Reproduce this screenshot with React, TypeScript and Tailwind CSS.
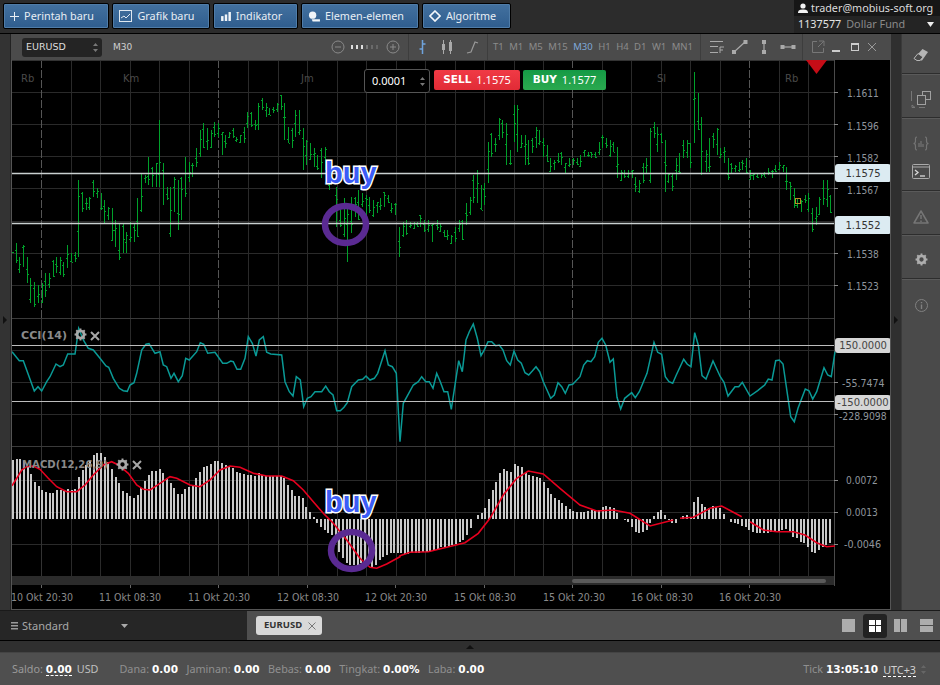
import React from "react";

const A: number[][] = [[36,575,580],[48,550,610],[57,590,640],[68,555,620],[80,590,670],[90,655,730],[102,665,740],[113,675,730],[125,670,730],[135,640,710],[147,640,685],[158,600,650],[168,590,640],[180,590,645],[190,605,650],[200,555,625],[212,580,605],[224,575,605],[234,360,590],[245,395,455],[257,415,450],[268,410,450],[279,360,410],[290,385,415],[302,400,450],[313,420,490],[324,440,480],[335,445,540],[346,480,560],[357,490,600],[368,490,580],[379,515,580],[390,485,545],[401,490,545],[412,415,530],[423,340,455],[434,345,370],[445,290,375],[456,320,380],[467,310,380],[478,180,380],[489,310,435],[500,380,420],[511,380,530],[522,350,455],[533,360,510],[544,350,480],[555,290,410],[566,305,365],[577,310,350],[588,265,320],[599,210,290],[610,190,265],[621,205,270],[632,210,260],[643,185,230],[654,190,230],[665,215,285],[676,225,265],[687,215,235],[698,205,235],[709,230,245],[720,225,245],[731,200,250],[742,155,205],[753,155,200],[764,180,210],[775,130,210],[786,115,150],[797,130,170],[808,145,165],[819,140,160],[830,130,155],[842,105,150],[853,130,240],[864,200,250],[875,205,265],[886,150,230],[897,150,225],[908,205,330],[919,240,315],[930,250,300],[941,265,320],[952,285,330],[963,265,355],[975,260,330],[987,310,390],[1009,380,500],[1020,450,500],[1031,415,530],[1042,440,605],[1053,410,520],[1064,410,470],[1075,390,480],[1086,400,440],[1097,405,465],[1108,410,460],[1119,420,470],[1130,425,460],[1141,415,450],[1152,395,440],[1163,405,430],[1174,430,460],[1185,430,465],[1197,500,590],[1208,485,530],[1219,480,525],[1230,485,505],[1241,485,505],[1252,485,500]];
const B: number[][] = [[0,465,500],[12,480,515],[24,480,515],[37,490,545],[50,480,510],[60,490,515],[71,510,530],[82,510,540],[93,525,550],[105,500,545],[116,480,515],[125,480,540],[138,430,495],[150,410,465],[160,345,430],[170,330,430],[182,375,450],[192,370,435],[203,245,370],[214,220,290],[225,235,275],[236,175,240],[247,180,235],[258,190,315],[269,270,315],[281,135,245],[292,135,275],[303,225,260],[314,225,315],[325,240,315],[336,235,280],[347,200,265],[358,210,255],[369,235,290],[380,255,305],[391,295,335],[402,300,330],[413,280,310],[424,275,315],[435,310,340],[447,295,320],[458,295,315],[470,295,315],[481,285,320],[492,270,290],[503,275,290],[514,275,295],[525,275,295],[536,245,285],[547,225,265],[558,235,265],[569,240,290],[580,245,275],[591,260,355],[602,330,360],[613,330,355],[624,330,355],[635,330,355],[646,350,395],[657,360,398],[668,310,370],[679,295,340],[690,205,370],[701,185,235],[712,200,275],[723,220,250],[734,240,395],[745,340,370],[756,340,392],[767,295,360],[778,280,340],[789,240,295],[800,240,295],[811,250,325],[822,35,250],[833,100,210],[844,170,345],[857,270,335],[868,235,335],[879,220,265],[890,205,285],[901,265,290],[912,260,310],[923,295,360],[934,310,340],[945,315,335],[956,305,335],[967,300,330],[978,295,340],[989,330,360],[1000,340,360],[1011,340,355],[1022,340,355],[1033,335,350],[1044,325,345],[1055,330,355],[1066,315,335],[1077,305,330],[1088,315,335],[1099,320,390],[1110,365,420],[1121,385,445],[1132,415,445],[1143,420,455],[1154,405,430],[1165,400,455],[1176,445,515],[1187,440,495],[1198,410,465],[1209,360,435],[1220,360,440],[1231,405,460]];

const cciA = [36,125,58,152,70,152,103,243,114,230,125,243,140,215,150,200,168,162,180,170,190,165,203,132,225,132,236,55,250,90,265,115,280,120,300,145,318,168,326,172,340,205,358,235,370,242,382,244,390,225,402,218,410,190,425,120,438,103,447,101,465,130,480,125,490,165,500,170,513,205,522,190,535,215,547,197,557,145,568,150,590,125,601,98,611,103,623,130,645,127,668,160,680,160,692,153,700,155,711,178,722,178,735,145,745,80,757,100,768,138,778,90,790,80,800,127,812,132,845,135,855,215,868,245,879,258,889,200,901,210,911,290,922,265,933,260,945,245,965,245,977,228,988,245,999,255,1010,302,1021,302,1032,292,1042,278,1055,230,1075,210,1088,208,1098,198,1110,210,1123,205,1133,190,1155,122,1165,165,1177,170,1189,190,1200,395];
const cciB = [0,365,10,250,40,195,55,185,65,170,77,185,88,185,99,205,110,160,121,185,132,215,143,215,154,268,176,122,187,155,198,60,208,35,220,12,232,55,243,107,253,90,264,65,275,65,287,77,298,75,309,90,320,122,331,135,342,93,353,120,364,130,375,158,386,165,397,153,408,140,419,155,430,185,452,235,463,225,474,188,485,200,496,220,507,195,518,193,540,170,551,135,562,122,573,125,584,110,595,67,606,55,617,75,630,127,640,117,651,232,662,267,674,235,695,218,706,233,718,215,741,160,762,67,773,97,785,103,796,170,807,185,818,190,829,165,851,118,862,133,873,140,884,38,895,75,906,167,918,177,939,123,961,170,972,187,984,228,1005,200,1016,200,1027,187,1050,228,1073,212,1094,195,1105,177,1116,180,1127,122,1138,120,1149,132,1172,290,1183,305,1194,265,1216,207,1227,212,1238,237,1250,215,1272,143,1283,165,1294,170,1305,95];

const histA = [450,448,448,452,470,492,515,528,541,547,548,548,540,540,543,538,540,537,500,480,465,450,435,430,430,440,455,478,500,520,542,548,558,565,555,535,512,495,483,482,478,490,505,520,535,552,553,538,530,525,505,485,470,468,462,452,452,460,465,470,475,487,490,492,495,495,498,490,495,497,497,497,497,497,503,525,540,558,558,565,590,605,622,640,650,660,670,675,690,725,745,760,765,765,765,760,760,760,770,765,750,740,735,730,730,728];
const histB = [700,703,702,700,698,698,696,696,695,690,688,680,680,678,675,672,665,660,645,625,598,585,578,565,537,510,487,458,447,453,457,433,437,440,455,465,468,470,475,485,505,522,535,540,548,558,567,572,575,575,575,572,570,572,570,560,558,562,563,578,597,600,605,620,635,638,635,630,608,587,577,570,585,600,610,610,597,587,585,595,545,530,552,562,565,558,560,565,582,597,605,610,612,617,622,630,635,640,640,640,638,635,632,632,630,628,635,650,655,665,670,680,695,700,690,680,675,670];

const redA = [36,527,50,505,65,480,80,470,100,468,120,478,145,505,170,530,200,545,230,545,255,525,280,495,310,465,335,455,355,465,385,490,410,525,430,538,450,540,480,520,510,500,530,505,570,525,600,530,630,510,660,480,690,468,720,472,760,490,800,498,845,498,880,512,910,540,940,575,970,610,1000,640,1040,690,1080,745,1110,772,1130,775,1160,762,1200,740];
const redB = [0,707,30,697,85,695,140,682,195,668,235,640,270,595,310,525,350,475,385,453,430,462,480,505,540,555,590,573,640,570,690,580,750,618,820,600];
const redC = [840,595,880,592,930,565,965,558,1025,590];
const redD = [1050,605,1090,630,1130,635,1180,635,1215,645,1250,668,1280,680,1305,678];

const pts = (a: number[], ox: number, oy: number) => {
  const out: string[] = [];
  for (let i = 0; i < a.length; i += 2) out.push(`${(ox + a[i] / 3).toFixed(1)},${(oy + a[i + 1] / 3).toFixed(1)}`);
  return out.join(" ");
};

const barPath = (() => {
  let d = "";
  const add = (r: number[], ox: number, oy: number, i: number) => {
    const x = Math.round(ox + r[0] / 3) + 0.5;
    const t = Math.round(oy + r[1] / 3);
    const b = Math.round(oy + r[2] / 3);
    const f1 = ((i * 37) % 100) / 100;
    const f2 = ((i * 61 + 23) % 100) / 100;
    const o = Math.round(t + (b - t) * f1) + 0.5;
    const c = Math.round(t + (b - t) * f2) + 0.5;
    d += `M${x} ${t}V${b}M${x - 1.5} ${o}H${x}M${x} ${c}H${x + 1.5}`;
  };
  A.forEach((r, i) => add(r, 0, 60, i));
  B.forEach((r, i) => add(r, 420, 60, i + 200));
  return d;
})();

const histPath = (() => {
  let d = "";
  histA.forEach((v, i) => {
    const x = Math.round((36 + i * 11) / 3) + 1;
    d += `M${x} 519V${Math.round(310 + v / 3)}`;
  });
  histB.forEach((v, i) => {
    const x = Math.round(400 + (i * 11) / 3) + 1;
    d += `M${x} 519V${Math.round(320 + v / 3)}`;
  });
  return d;
})();

const vGrid = [71, 100, 130, 159, 189, 248, 278, 307, 337, 366, 396, 425, 455, 484, 514, 543, 602, 631, 661, 690, 720, 779, 808];
const vDash = [41, 218, 572, 749];
const hGrid = [92, 124, 156, 188, 221, 253, 285, 350, 382, 414, 480, 512, 544];
const xLabels: [number, string][] = [[11, "10 Okt 20:30"], [99, "11 Okt 08:30"], [188, "11 Okt 20:30"], [277, "12 Okt 08:30"], [365, "12 Okt 20:30"], [454, "15 Okt 08:30"], [543, "15 Okt 20:30"], [631, "16 Okt 08:30"], [719, "16 Okt 20:30"]];
const yLabels: [number, string, number][] = [[847, "1.1611", 97], [847, "1.1596", 130], [847, "1.1582", 162], [847, "1.1567", 194], [847, "1.1538", 258], [847, "1.1523", 290], [842, "-55.7474", 387], [839, "-228.9098", 420], [846, "0.0072", 484], [846, "0.0013", 516], [844, "-0.0046", 548]];

function Chart() {
  return (
    <svg viewBox="11 60 880 549" width={880} height={549} className="block">
      <g stroke="#2a2a2a" strokeWidth={1} shapeRendering="crispEdges">
        {vGrid.map((x) => <path key={x} d={`M${x + 0.5} 60V576`} />)}
        {hGrid.map((y) => <path key={y} d={`M12 ${y + 0.5}H834`} />)}
      </g>
      <g stroke="#555" strokeWidth={1} strokeDasharray="8 2" shapeRendering="crispEdges">
        {vDash.map((x) => <path key={x} d={`M${x + 0.5} 60V318`} />)}
      </g>
      <g stroke="#333" strokeWidth={1} shapeRendering="crispEdges">
        {vDash.map((x) => <path key={x} d={`M${x + 0.5} 318V576`} />)}
        <path d="M12 60.5H834" />
        <path d="M12 318.5H834M12 446.5H834" stroke="#3a3a3a" strokeWidth={1.5} />
        <path d="M834.5 60V586" stroke="#4a4a4a" />
      </g>
      <g stroke="#888" shapeRendering="crispEdges">
        {[92, 124, 156, 188, 253, 285, 382, 414, 480, 512, 544].map((y) => <path key={y} d={`M834 ${y + 0.5}H838`} />)}
      </g>
      <path d={barPath} stroke="#00a02a" strokeWidth={1} fill="none" shapeRendering="crispEdges" />
      <path d="M12 173.5H834" stroke="#c9d0d0" strokeWidth={1.6} />
      <path d="M12 223.5H834" stroke="#c9d0d0" strokeWidth={1.6} />
      <rect x={795.5} y={198.5} width={5} height={5} fill="none" stroke="#b88a28" />
      <polyline points={pts(cciA, 0, 310) + " " + pts(cciB, 400, 320)} fill="none" stroke="#0a9a96" strokeWidth={1.5} />
      <path d="M12 345.5H834M12 401.5H834" stroke="#bdbdbd" strokeWidth={1} shapeRendering="crispEdges" />
      <path d={histPath} stroke="#c8c8c8" strokeWidth={2} fill="none" shapeRendering="crispEdges" />
      <polyline points={pts(redA, 0, 310) + " " + pts(redB, 400, 320)} fill="none" stroke="#e8001f" strokeWidth={1.6} />
      <polyline points={pts(redC, 400, 320)} fill="none" stroke="#e8001f" strokeWidth={1.6} />
      <polyline points={pts(redD, 400, 320)} fill="none" stroke="#e8001f" strokeWidth={1.6} />
      <ellipse cx={345.5} cy={224.5} rx={20.5} ry={18.5} fill="none" stroke="#5a2a92" strokeWidth={6.5} />
      <ellipse cx={351.5} cy={550.5} rx={20.5} ry={18.5} fill="none" stroke="#5a2a92" strokeWidth={6.5} />
      <path d="M806 60H827L816.5 74Z" fill="#c60d17" />
      <rect x={12} y={576} width={822} height={9} fill="#2b2b2b" />
      <rect x={572} y={579} width={254} height={4} rx={2} fill="#5a5a5a" />
      <g stroke="#666" shapeRendering="crispEdges">
        {[41, 130, 218, 307, 395, 484, 572, 661, 749].map((x) => <path key={x} d={`M${x + 0.5} 585V588`} />)}
      </g>
      <g fill="#8f959c" fontSize={10} fontFamily="'DejaVu Sans', sans-serif">
        {yLabels.map(([x, t, y]) => <text key={t} x={x} y={y} textLength={t.length * 5.3} lengthAdjust="spacingAndGlyphs">{t}</text>)}
      </g>
      <g fill="#8a8a8a" fontSize={10} fontFamily="'DejaVu Sans', sans-serif">
        {xLabels.map(([x, t]) => <text key={t} x={x} y={601} textLength={62} lengthAdjust="spacingAndGlyphs">{t}</text>)}
      </g>
      <g fill="#4a4a4a" fontSize={10} fontFamily="'DejaVu Sans', sans-serif">
        <text x={21} y={82}>Rb</text>
        <text x={123} y={82}>Km</text>
        <text x={301} y={82}>Jm</text>
        <text x={657} y={82}>Sl</text>
        <text x={785} y={82}>Rb</text>
      </g>
      <g fill="#8a8a8a" fontSize={11} fontWeight={700} fontFamily="'DejaVu Sans', sans-serif">
        <text x={21} y={339} textLength={46} lengthAdjust="spacingAndGlyphs">CCI(14)</text>
        <text x={22} y={468} textLength={86} lengthAdjust="spacingAndGlyphs">MACD(12,26,9)</text>
      </g>
    </svg>
  );
}

function Gear({ x, y }: { x: string; y: string }) {
  return (
    <svg width="13" height="13" viewBox="0 0 24 24" className={`absolute ${x} ${y}`}>
      <circle cx="12" cy="12" r="6.5" fill="none" stroke="#a8a8a8" strokeWidth="5" />
      <path d="M12 1v4M12 19v4M1 12h4M19 12h4M4.2 4.2l3 3M16.8 16.8l3 3M4.2 19.800l3-3M16.800 7.200l3-3" stroke="#a8a8a8" strokeWidth="3.500" />
    </svg>
  );
}

function Cross({ x, y }: { x: string; y: string }) {
  return (
    <svg width="10" height="10" viewBox="0 0 10 10" className={`absolute ${x} ${y}`}>
      <path d="M1 1l8 8M9 1l-8 8" stroke="#a8a8a8" strokeWidth="2" />
    </svg>
  );
}

function HeaderButton({ icon, label, w }: { icon: React.ReactNode; label: string; w: string }) {
  return (
    <div className={`${w} h-[26px] flex items-center justify-center gap-[5px] pr-[8px] rounded-[2px] border border-black bg-gradient-to-b from-[#43719f] to-[#2f5d8e] text-[10.8px] text-[#e8eef4] shadow-[inset_0_0_0_1px_#4f7ca8]`}>
      {icon}
      <span>{label}</span>
    </div>
  );
}

function Tf({ t, active }: { t: string; active?: boolean }) {
  return <span className={active ? "text-[#7fa9d9]" : "text-[#8c8c8c]"}>{t}</span>;
}

function SideRow({ h, children }: { h: string; children: React.ReactNode }) {
  return <div className={`${h} flex flex-col items-center justify-center gap-[13px] border-b border-[#2d2d2d] shadow-[0_1px_0_#5a5a5a]`}>{children}</div>;
}

function Stat({ label, value }: { label: string; value: string }) {
  return (
    <span className="flex items-baseline gap-[3px]">
      <span className="text-[#8f8f8f]">{label}</span>
      <span className="font-['DejaVu_Sans',sans-serif] text-[10.5px] font-bold text-white">{value}</span>
    </span>
  );
}

export default function App() {
  return (
    <div className="w-[940px] h-[685px] flex flex-col overflow-hidden bg-[#2b2b2b] font-['Noto_Sans',sans-serif]">
      {/* top bar */}
      <header className="h-[34px] shrink-0 flex justify-between border-b border-black bg-[#2c2c2c]">
        <div className="flex items-center gap-[3px] pl-[3px] pb-[1px]">
          <HeaderButton w="w-[106px]" label="Perintah baru" icon={<svg width="9" height="9" viewBox="0 0 9 9"><path d="M4.500 0v9M0 4.500h9" stroke="#e8eef4" strokeWidth="1" /></svg>} />
          <HeaderButton w="w-[98px]" label="Grafik baru" icon={<svg width="13" height="12" viewBox="0 0 13 12" fill="none" stroke="#dfe8f0"><rect x=".5" y=".5" width="12" height="11" /><path d="M2 8l3-2 2 2 4-4" /></svg>} />
          <HeaderButton w="w-[85px]" label="Indikator" icon={<svg width="10" height="9" viewBox="0 0 12 11" fill="#f0f4f8"><rect y="5" width="3" height="6" /><rect x="4.500" y="3" width="3" height="8" /><rect x="9" width="3" height="11" /></svg>} />
          <HeaderButton w="w-[118px]" label="Elemen-elemen" icon={<svg width="12" height="11" viewBox="0 0 13 12" fill="#f0f4f8"><circle cx="5" cy="4.500" r="4" /><path d="M4 9h9v2.500H5z" /></svg>} />
          <HeaderButton w="w-[89px]" label="Algoritme" icon={<svg width="12" height="12" viewBox="0 0 12 12" fill="none" stroke="#f4f7fa" strokeWidth="1.600"><path d="M6 1l5 5-5 5-5-5z" /></svg>} />
        </div>
        <div className="w-[146px] flex flex-col text-[10.8px] leading-none">
          <div className="h-[16px] bg-[#161616] flex items-center gap-[3px] pl-[4px] text-[#dcdcdc]">
            <svg width="10" height="10" viewBox="0 0 10 10" fill="#f2f2f2"><circle cx="5" cy="3" r="2.600" /><path d="M0 10c0-3 2-3.500 5-3.500s5 .5 5 3.500z" /></svg>
            <span>trader@mobius-soft.org</span>
          </div>
          <div className="flex-1 bg-[#242424] flex items-center pl-[4px] pr-[6px]">
            <span className="text-[#e4e4e4]">1137577</span>
            <span className="ml-[5px] text-[#8a8a8a]">Dollar Fund</span>
            <svg width="7" height="5" viewBox="0 0 7 5" className="ml-auto"><path d="M0 0h7L3.500 5z" fill="#eee" /></svg>
          </div>
        </div>
      </header>

      {/* main */}
      <main className="h-[576px] shrink-0 flex">
        <div className="w-[11px] bg-[#333] flex items-center pb-[4px] pl-[3px] border-r border-[#222]">
          <svg width="4" height="8" viewBox="0 0 4 8"><path d="M0 0l4 4-4 4z" fill="#111" /></svg>
        </div>
        <section className="w-[880px] flex flex-col">
          <div className="h-[26px] shrink-0 flex bg-[#4b4b4b] text-[10px] leading-none">
            <div className="w-[398px] flex items-center border-r border-[#3d3d3d]">
              <div className="ml-[11px] w-[80px] h-[19px] rounded-[3px] bg-[#242424] flex items-center pl-[4px] pr-[4px] text-[9.500px] text-[#dedede] font-['DejaVu_Sans',sans-serif]">
                <span>EURUSD</span>
                <svg width="5" height="11" viewBox="0 0 5 11" className="ml-auto"><path d="M0 4l2.500-3 2.500 3zM0 7l2.500 3 2.500-3z" fill="#777" /></svg>
              </div>
              <span className="ml-[11px] text-[9px] text-[#d0d0d0] font-['DejaVu_Sans',sans-serif]">M30</span>
              <svg width="72" height="14" viewBox="0 0 72 14" className="ml-auto mr-[5px]" fill="none" stroke="#8a8a8a">
                <circle cx="7" cy="7" r="6" /><path d="M4 7h6" />
                <circle cx="62" cy="7" r="6" /><path d="M59 7h6M62 4v6" />
                <g stroke="none">
                  <rect x="20" y="5" width="2" height="4" fill="#ddd" /><rect x="25" y="5" width="2" height="4" fill="#ddd" /><rect x="30" y="5" width="2" height="4" fill="#ddd" />
                  <rect x="35" y="5" width="2" height="4" fill="#777" /><rect x="40" y="5" width="2" height="4" fill="#6a6a6a" /><rect x="45" y="5" width="2" height="4" fill="#666" />
                </g>
              </svg>
            </div>
            <div className="w-[79px] flex items-center pl-[9px] border-r border-[#3d3d3d]">
              <svg width="66" height="16" viewBox="0 0 66 16" fill="none">
                <path d="M4.500 1v14M1.500 10h3M4.500 5h3" stroke="#6fa3dc" strokeWidth="1.500" />
                <g transform="translate(-2.500 0)">
                  <path d="M28 1v14M35 1v14" stroke="#aaa" /><rect x="26.500" y="5" width="3" height="6" fill="#aaa" /><rect x="33.500" y="3" width="3" height="9" fill="#aaa" />
                </g>
                <path d="M49 14l4-1 4-10 3 1" stroke="#999" strokeWidth="1.200" />
              </svg>
            </div>
            <div className="w-[213px] flex items-center justify-between pl-[5px] pr-[7px] text-[9.500px] border-r border-[#3d3d3d]">
              {["T1", "M1", "M5", "M15"].map((t) => <Tf key={t} t={t} />)}
              <Tf t="M30" active />
              {["H1", "H4", "D1", "W1", "MN1"].map((t) => <Tf key={t} t={t} />)}
            </div>
            <div className="w-[102px] flex items-center pl-[8px] border-r border-[#3d3d3d]">
              <svg width="92" height="16" viewBox="0 0 92 16" fill="none" stroke="#aaa">
                <path d="M1 2.500h13M1 7.500h8M1 13.500h8" strokeWidth="1" />
                <path d="M11 8h4M11 8v6M11 11h3" strokeWidth="1" />
                <g transform="translate(-2 0)">
                  <path d="M27 13L38 3" strokeWidth="1.200" /><rect x="25.500" y="11.500" width="3" height="3" fill="#aaa" /><rect x="37" y="1.500" width="3" height="3" fill="#aaa" />
                  <path d="M57 3v10" strokeWidth="1.200" /><rect x="55.500" y="1.500" width="3" height="3" fill="#aaa" /><rect x="55.500" y="11.500" width="3" height="3" fill="#aaa" />
                  <path d="M75 8h11" strokeWidth="1.200" /><rect x="74" y="6.500" width="3" height="3" fill="#aaa" /><rect x="85" y="6.500" width="3" height="3" fill="#aaa" />
                </g>
              </svg>
            </div>
            <div className="flex-1 flex items-center pl-[8px]">
              <svg width="72" height="14" viewBox="0 0 72 14" fill="none">
                <path d="M6 1.500H1.500v11h11V8M8 1h5v5M13 1L7 7" stroke="#777" />
                <path d="M21 11h8" stroke="#ccc" strokeWidth="2" />
                <rect x="40.500" y="3.500" width="7" height="7" stroke="#ccc" /><path d="M40 4h8" stroke="#ccc" strokeWidth="2" />
                <path d="M57 3l8 8M65 3l-8 8" stroke="#999" />
              </svg>
            </div>
          </div>
          <div className="relative flex-1 bg-black border-b border-[#555] border-l border-l-[#555] border-r border-r-[#555] overflow-hidden">
            <div className="absolute left-[-1px] top-0"><Chart /></div>

            {/* trade controls */}
            <div className="absolute left-[352px] top-[9px] w-[66px] h-[24px] rounded-[3px] border border-[#555] bg-black flex items-center pl-[7px] pr-[4px] text-[11px] text-white">
              <span>0.0001</span>
              <svg width="5" height="11" viewBox="0 0 5 11" className="ml-auto"><path d="M0 4l2.500-3 2.500 3zM0 7l2.500 3 2.500-3z" fill="#777" /></svg>
            </div>
            <div className="absolute left-[422px] top-[10px] w-[86px] h-[20px] rounded-[2px] bg-gradient-to-b from-[#f03a45] to-[#e12b36] flex items-center justify-center gap-[5px] text-[11px] text-white">
              <b className="font-['DejaVu_Sans',sans-serif] text-[10.500px]">SELL</b><span>1.1575</span>
            </div>
            <div className="absolute left-[511px] top-[10px] w-[83px] h-[20px] rounded-[2px] bg-gradient-to-b from-[#149a45] to-[#2aa94f] flex items-center justify-center gap-[5px] text-[11px] text-white">
              <b className="font-['DejaVu_Sans',sans-serif] text-[10.500px]">BUY</b><span>1.1577</span>
            </div>

            {/* price tags */}
            <div className="absolute left-[823px] top-[104px] w-[56px] h-[18px] rounded-[3px] bg-[#dcebf2] flex items-center justify-center text-[10px] text-[#333] font-['DejaVu_Sans',sans-serif]">1.1575</div>
            <div className="absolute left-[823px] top-[156px] w-[56px] h-[18px] rounded-[3px] bg-[#dcebf2] flex items-center justify-center text-[10px] text-[#333] font-['DejaVu_Sans',sans-serif]">1.1552</div>
            <div className="absolute left-[823px] top-[278px] w-[56px] h-[15px] rounded-[3px] bg-[#d6d6d6] flex items-center justify-center text-[10px] text-[#444] font-['DejaVu_Sans',sans-serif]">150.0000</div>
            <div className="absolute left-[823px] top-[335px] w-[56px] h-[15px] rounded-[3px] bg-[#d6d6d6] flex items-center justify-center text-[10px] text-[#444] font-['DejaVu_Sans',sans-serif]">-150.0000</div>

            <span className="absolute left-[313px] top-[99px] text-[29px] leading-none font-bold text-[#3c5cf6] font-['Liberation_Sans',sans-serif] [-webkit-text-stroke:3px_#fff] [paint-order:stroke_fill]">buy</span>
            <span className="absolute left-[313px] top-[428px] text-[29px] leading-none font-bold text-[#3c5cf6] font-['Liberation_Sans',sans-serif] [-webkit-text-stroke:3px_#fff] [paint-order:stroke_fill]">buy</span>

            <Gear x="left-[62px]" y="top-[268px]" />
            <Cross x="left-[78px]" y="top-[271px]" />
            <Gear x="left-[104px]" y="top-[398px]" />
            <Cross x="left-[120px]" y="top-[400px]" />
          </div>
        </section>
        <div className="w-[10px] bg-[#2f2f2f] flex items-center justify-center pb-[4px]">
          <svg width="4" height="8" viewBox="0 0 4 8"><path d="M0 0l4 4-4 4z" fill="#111" /></svg>
        </div>
        <aside className="w-[39px] bg-[#4a4a4a] border-l border-[#3a3a3a] flex flex-col">
          <SideRow h="h-[40px] pt-[2px]">
            <svg width="16" height="14" viewBox="0 0 16 14"><path d="M9.500 1L15 4 9 12.500H4L1 10.500z" fill="#b5b5b5" /><path d="M5 5.500l5 3.500L7 12.500H4L1 10.500z" fill="#4a4a4a" stroke="#b5b5b5" /></svg>
          </SideRow>
          <SideRow h="h-[44px] pt-[8px]">
            <svg width="21" height="19" viewBox="0 0 21 19" fill="none" stroke="#a0a0a0">
              <path d="M.500 1v10" stroke="#777" />
              <rect x="11.500" y="1.500" width="8" height="8" />
              <rect x="6.500" y="5.500" width="8" height="9" fill="#4a4a4a" />
              <path d="M1 15l3 2.500H1zM8 17.500h6" stroke="#777" />
            </svg>
          </SideRow>
          <SideRow h="h-[73px] pt-[7px]">
            <svg width="16" height="15" viewBox="0 0 16 15" fill="none" stroke="#747474" strokeWidth="1.200">
              <path d="M4 1C2 1 2.500 3 2.500 5S1.500 7.500.5 7.500C1.500 7.500 2.500 8 2.500 10S2 14 4 14M12 1c2 0 1.500 2 1.500 4s1 2.500 2 2.500c-1 0-2 .5-2 2.500s.5 4-1.500 4" />
              <path d="M6 7v4M8 5v6M10 8v3" />
            </svg>
            <svg width="18" height="15" viewBox="0 0 18 15" fill="none" stroke="#d8d8d8">
              <rect x=".5" y=".5" width="17" height="14" rx="1" stroke="#aaa" />
              <path d="M1 3h16" stroke="#aaa" />
              <path d="M3 6l3 2.500L3 11" strokeWidth="1.300" /><path d="M8 12h5" strokeWidth="1.300" />
            </svg>
          </SideRow>
          <SideRow h="h-[44px] pt-[8px]">
            <svg width="16" height="14" viewBox="0 0 16 14" fill="none" stroke="#767676" strokeWidth="1.500"><path d="M8 1l7 12H1z" strokeLinejoin="round" /><path d="M8 5v4M8 10.500v1.500" /></svg>
          </SideRow>
          <SideRow h="h-[44px] pt-[6px]">
            <svg width="13" height="13" viewBox="0 0 24 24"><circle cx="12" cy="12" r="6.500" fill="none" stroke="#adadad" strokeWidth="5" /><path d="M12 1v4M12 19v4M1 12h4M19 12h4M4.200 4.200l3 3M16.800 16.800l3 3M4.200 19.800l3-3M16.800 7.200l3-3" stroke="#adadad" strokeWidth="3.500" /></svg>
          </SideRow>
          <div className="h-[44px] pt-[8px] flex items-center justify-center">
            <svg width="13" height="13" viewBox="0 0 13 13" fill="none" stroke="#808080"><circle cx="6.500" cy="6.500" r="6" /><path d="M6.500 5.500v4.500M6.500 3v1.300" strokeWidth="1.400" /></svg>
          </div>
        </aside>
      </main>

      {/* tabs bar */}
      <div className="h-[31px] shrink-0 flex border-b border-black border-t border-t-[#1a1a1a]">
        <div className="w-[247px] bg-[#262626] flex items-center pl-[11px] pt-[1px] text-[11px] text-[#a8a8a8]">
          <svg width="7" height="8" viewBox="0 0 7 8" fill="#9a9a9a"><rect width="7" height="1.500" /><rect y="3" width="7" height="1.500" /><rect y="6" width="7" height="1.500" /></svg>
          <span className="ml-[4px]">Standard</span>
          <svg width="7" height="4" viewBox="0 0 7 4" className="ml-[52px]"><path d="M0 0h7L3.500 4z" fill="#aaa" /></svg>
        </div>
        <div className="flex-1 bg-[#4f4f4f] flex items-center pl-[9px] pr-[7px]">
          <div className="w-[66px] h-[19px] rounded-[3px] bg-[#d9d9d9] flex items-center pl-[8px] pr-[6px] text-[9.500px] font-bold text-[#333] font-['Noto_Sans',sans-serif]">
            <span>EURUSD</span>
            <svg width="8" height="8" viewBox="0 0 8 8" className="ml-auto"><path d="M.5.5l7 7M7.500.5l-7 7" stroke="#777" /></svg>
          </div>
          <div className="ml-auto flex items-center">
            <div className="w-[13px] h-[13px] bg-[#adadad] mr-[8px]" />
            <div className="w-[24px] h-[24px] rounded-[3px] bg-[#222] flex items-center justify-center mr-[7px]">
              <div className="w-[12px] h-[12px] grid grid-cols-2 grid-rows-2 gap-px">
                <div className="bg-white" /><div className="bg-white" /><div className="bg-white" /><div className="bg-white" />
              </div>
            </div>
            <div className="w-[13px] h-[13px] grid grid-cols-2 gap-px mr-[13px]"><div className="bg-[#adadad]" /><div className="bg-[#adadad]" /></div>
            <div className="w-[13px] h-[13px] grid grid-rows-2 gap-px"><div className="bg-[#adadad]" /><div className="bg-[#adadad]" /></div>
          </div>
        </div>
      </div>

      <div className="h-[11px] shrink-0 bg-[#2f2f2f] flex justify-center items-end">
        <svg width="8" height="4" viewBox="0 0 8 4" className="mb-[3px]"><path d="M0 4l4-4 4 4z" fill="#111" /></svg>
      </div>

      {/* status */}
      <footer className="flex-1 bg-[#4f4f4f] flex items-center pl-[12px] pr-[14px] pt-[1px] text-[10.8px] border-t border-[#444]">
        <span className="text-[#9a9a9a]">Saldo:</span>
        <span className="ml-[3px] font-['DejaVu_Sans',sans-serif] text-[10.5px] font-bold text-white border-b border-dashed border-white leading-[12px]">0.00</span>
        <span className="ml-[5px] text-[#c0c0c0]">USD</span>
        <div className="ml-[21px] flex gap-[8.500px]">
          <Stat label="Dana:" value="0.00" />
          <Stat label="Jaminan:" value="0.00" />
          <Stat label="Bebas:" value="0.00" />
          <Stat label="Tingkat:" value="0.00%" />
          <Stat label="Laba:" value="0.00" />
        </div>
        <span className="ml-auto text-[#8f8f8f]">Tick</span>
        <span className="ml-[3px] font-['DejaVu_Sans',sans-serif] text-[10.5px] font-bold text-white">13:05:10</span>
        <span className="ml-[5px] text-[#d0d0d0] border-b border-dashed border-white leading-[13px]">UTC+3</span>
        <svg width="5" height="11" viewBox="0 0 5 11" className="ml-[5px]"><path d="M0 4l2.500-3 2.500 3zM0 7l2.500 3 2.500-3z" fill="#666" /></svg>
      </footer>
    </div>
  );
}
